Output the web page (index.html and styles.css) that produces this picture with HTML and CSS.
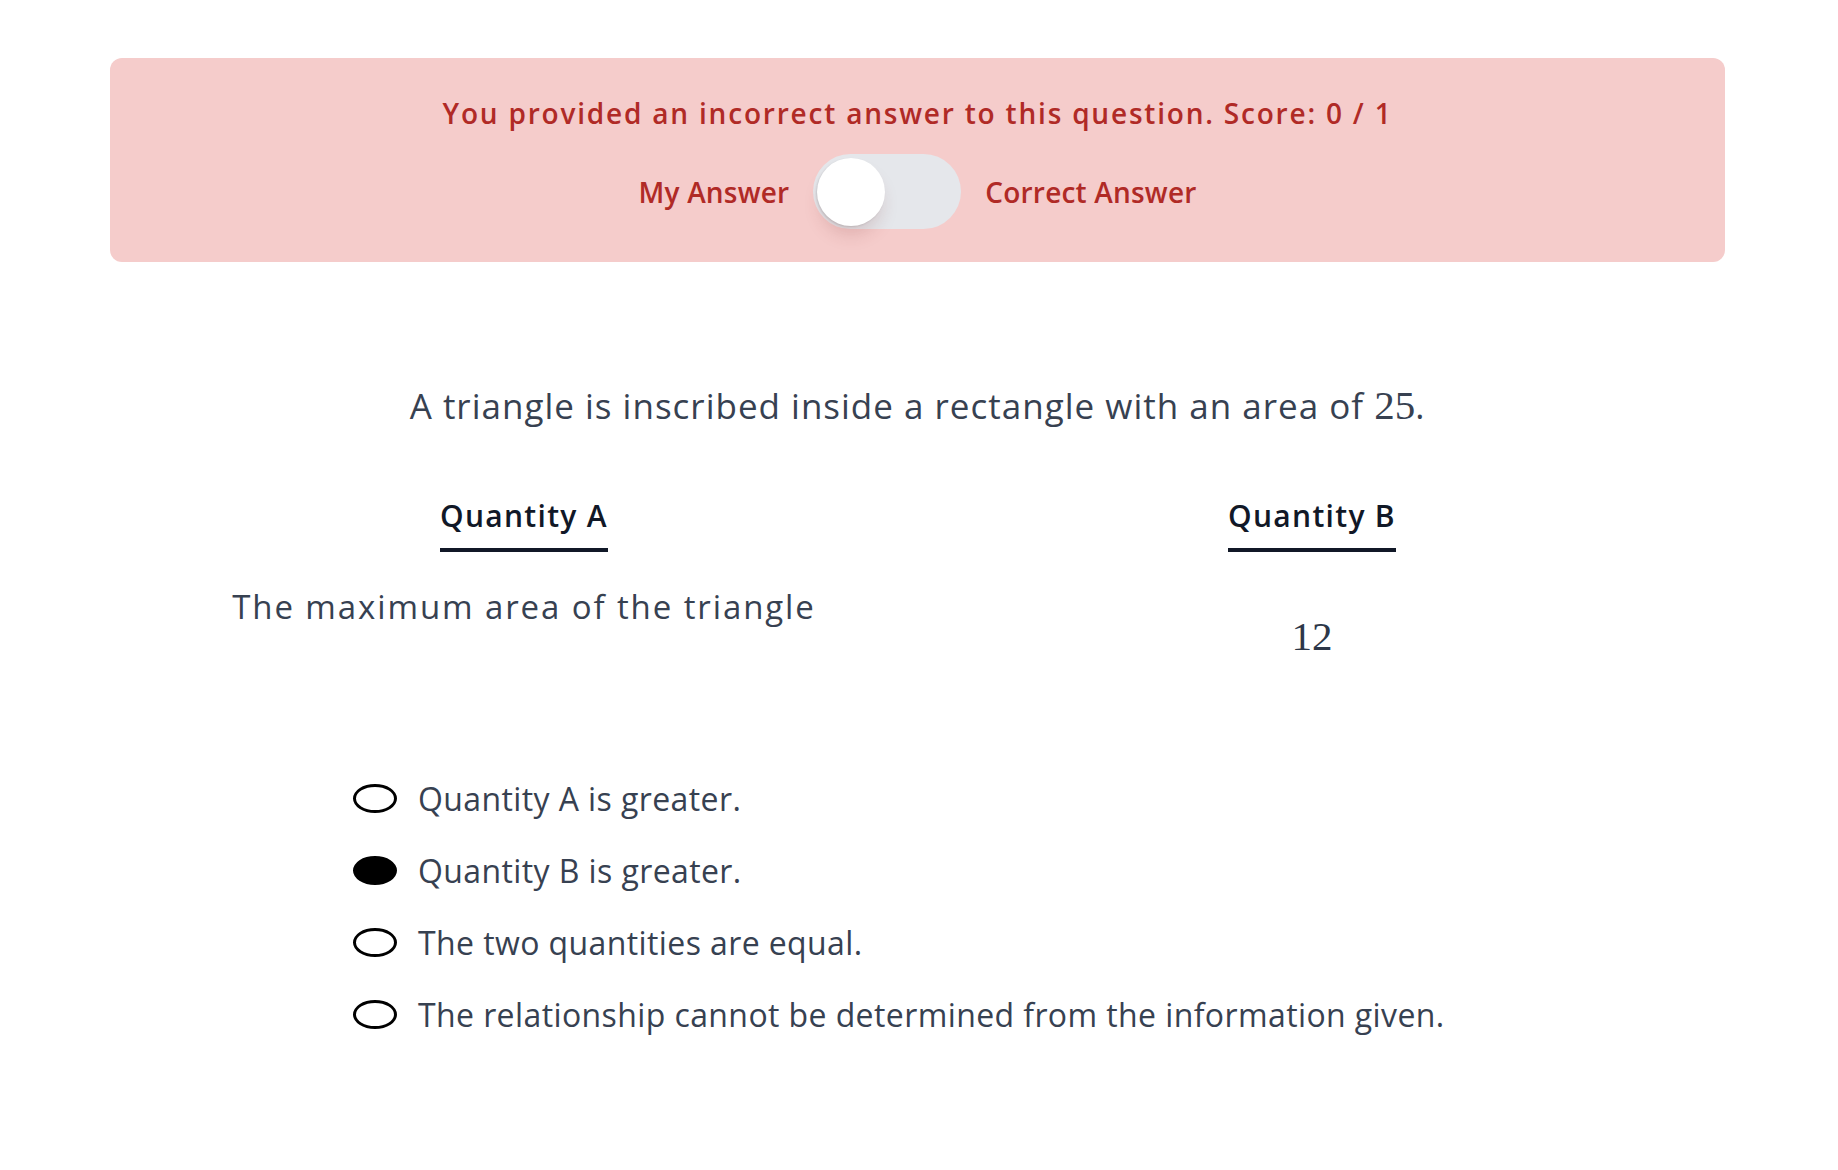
FILE: index.html
```html
<!DOCTYPE html>
<html lang="en">
<head>
<meta charset="utf-8">
<title>Quantitative Comparison</title>
<link rel="stylesheet" href="styles.css">
</head>
<body>
<div class="page">
  <section class="banner">
    <p class="banner-title">You provided an incorrect answer to this question. Score: 0 / 1</p>
    <div class="toggle-row">
      <span class="toggle-label">My Answer</span>
      <div class="toggle"><div class="knob"></div></div>
      <span class="toggle-label">Correct Answer</span>
    </div>
  </section>

  <p class="question">A triangle is inscribed inside a rectangle with an area of <span class="math">25</span>.</p>

  <div class="quantities">
    <div class="qcol">
      <h3 class="qhead">Quantity A</h3>
      <p class="qval">The maximum area of the triangle</p>
    </div>
    <div class="qcol">
      <h3 class="qhead">Quantity B</h3>
      <p class="qval qval-math"><span class="math">12</span></p>
    </div>
  </div>

  <ul class="options">
    <li class="option"><span class="radio"></span><span>Quantity A is greater.</span></li>
    <li class="option"><span class="radio checked"></span><span>Quantity B is greater.</span></li>
    <li class="option"><span class="radio"></span><span>The two quantities are equal.</span></li>
    <li class="option"><span class="radio"></span><span>The relationship cannot be determined from the information given.</span></li>
  </ul>
</div>
</body>
</html>
```

FILE: styles.css
```css
* { box-sizing: border-box; }

body {
  margin: 0;
  background: #ffffff;
  font-family: "Open Sans", "Lato", sans-serif;
  color: #374151;
}

.page {
  margin: 58px 113px 0 110px;
}

.banner {
  background: #f5cccb;
  border-radius: 12px;
  padding: 35px 20px 33px;
  display: flex;
  flex-direction: column;
  align-items: center;
  gap: 21px;
}

.banner-title {
  margin: 0;
  font-size: 28px;
  line-height: 40px;
  font-weight: 600;
  letter-spacing: 1.8px;
  color: #b02a26;
}

.toggle-row {
  display: flex;
  align-items: center;
  gap: 24px;
}

.toggle-label {
  font-size: 28px;
  font-weight: 600;
  letter-spacing: 0.2px;
  color: #b02a26;
}

.toggle {
  width: 148px;
  height: 75px;
  border-radius: 999px;
  background: #e5e7eb;
  display: flex;
  align-items: center;
  padding: 0 4px;
}

.knob {
  width: 68px;
  height: 68px;
  border-radius: 50%;
  background: #ffffff;
  box-shadow: -1px 1px 2px rgba(0, 0, 0, 0.12), 0 12px 18px -4px rgba(120, 40, 40, 0.18);
}

.question {
  margin: 118px 0 0;
  text-align: center;
  font-size: 35px;
  line-height: 51px;
  letter-spacing: 1px;
  color: #374151;
}

.math {
  font-family: "Liberation Serif", "DejaVu Serif", serif;
  font-size: 41px;
  line-height: 1;
  letter-spacing: 0;
}

.quantities {
  display: grid;
  grid-template-columns: 1fr 1fr;
  padding: 0 19px 0 20px;
  margin-top: 67px;
}

.qcol {
  display: flex;
  flex-direction: column;
  align-items: center;
}

.qhead {
  margin: 0;
  font-size: 30px;
  line-height: 36px;
  font-weight: 600;
  letter-spacing: 1.3px;
  color: #111827;
  padding-bottom: 14px;
  border-bottom: 4px solid #111827;
}

.qval {
  margin: 30px 0 0;
  font-size: 33px;
  line-height: 50px;
  letter-spacing: 1.9px;
  text-align: center;
}

.qval-math {
  margin-top: 61px;
  color: #2d3748;
}

.options {
  list-style: none;
  margin: 99px 0 0;
  padding: 0 0 0 243px;
}

.option {
  display: flex;
  align-items: center;
  gap: 21px;
  height: 72px;
  font-size: 32px;
  letter-spacing: 0.4px;
  color: #374151;
}

.radio {
  width: 44px;
  height: 29px;
  border: 3px solid #000000;
  border-radius: 50%;
  flex: none;
}

.radio.checked {
  background: #000000;
}
```
